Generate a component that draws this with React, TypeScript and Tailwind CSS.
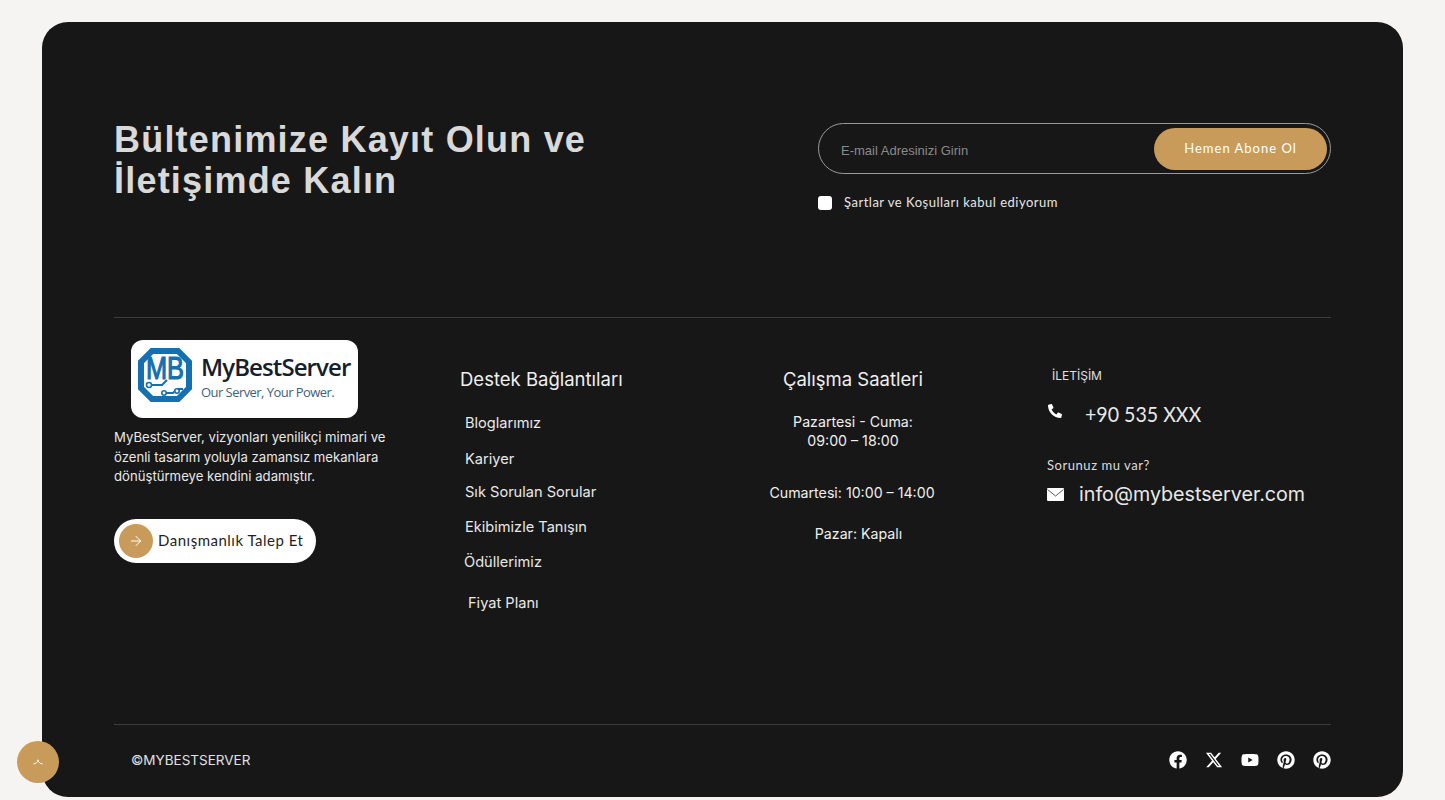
import { ArrowRight } from "lucide-react";
import { FaFacebook, FaPhone, FaPinterest, FaYoutube } from "react-icons/fa";
import { FaXTwitter } from "react-icons/fa6";

const links = [
  { label: "Bloglarımız", cls: "ml-[5px] mt-0" },
  { label: "Kariyer", cls: "ml-[5px] mt-[14px]" },
  { label: "Sık Sorulan Sorular", cls: "ml-[5px] mt-[11px]" },
  { label: "Ekibimizle Tanışın", cls: "ml-[5px] mt-[13px]" },
  { label: "Ödüllerimiz", cls: "ml-[4px] mt-[13px]" },
  { label: "Fiyat Planı", cls: "ml-[8px] mt-[19px]" },
];

const socials = [FaFacebook, FaXTwitter, FaYoutube, FaPinterest, FaPinterest];

function LogoMark() {
  return (
    <svg viewBox="0 0 54 54" className="-mt-[9px] h-[54px] w-[54px] shrink-0">
      <path d="M14 3H40L51 14V40L40 51H14L3 40V14Z" fill="none" stroke="#1470b0" strokeWidth="6" />
      <text x="8" y="31" textLength="38" lengthAdjust="spacingAndGlyphs" fontFamily="'Liberation Sans', sans-serif" fontSize="31" fontWeight="400" fill="#1470b0" stroke="#1470b0" strokeWidth="1.2">
        MB
      </text>
      <path d="M11 37H24L29 32M26 45H35L39 41H45" fill="none" stroke="#1470b0" strokeWidth="2" />
      <circle cx="11" cy="37" r="2.5" fill="white" stroke="#1470b0" strokeWidth="1.6" />
      <circle cx="26" cy="45" r="2.2" fill="white" stroke="#1470b0" strokeWidth="1.6" />
      <circle cx="39" cy="43" r="2.2" fill="white" stroke="#1470b0" strokeWidth="1.6" />
    </svg>
  );
}

function MailIcon() {
  return (
    <svg viewBox="0 0 17 13" className="h-[13px] w-[17px] shrink-0">
      <rect width="17" height="13" rx="1" fill="#ffffff" />
      <path d="M0.5 1.5L8.5 8L16.5 1.5" fill="none" stroke="#171717" strokeWidth="0.7" />
    </svg>
  );
}

export default function App() {
  return (
    <div className="relative h-[800px] overflow-hidden bg-[#f5f4f2] pt-[22px] pl-[42px] pr-[42px] font-['Inter',sans-serif]">
      <div className="h-[775px] rounded-[26px] bg-[#171717] px-[72px] pt-[98px] text-[#e8e8e8]">
        {/* newsletter */}
        <div className="flex h-[198px] border-b border-[#3c3c3c]">
          <h2 className="-mt-[1px] w-[704px] font-['Liberation_Sans',sans-serif] text-[36px] leading-[41px] font-bold tracking-[1.2px] text-[#d9d9d9]">
            Bültenimize Kayıt Olun ve
            <br />
            İletişimde Kalın
          </h2>
          <div className="w-[513px] pt-[3px]">
            <div className="flex h-[51px] items-center justify-between rounded-full border border-[#9a9a9a] pl-[22px] pr-[3px]">
              <span className="pt-[5px] font-['Liberation_Sans',sans-serif] text-[13px] text-[#8a8a8a]">E-mail Adresinizi Girin</span>
              <button className="h-[42px] w-[173px] rounded-full bg-[#c89b5a] font-['Lato',sans-serif] text-[13px] tracking-[1px] text-white">
                Hemen Abone Ol
              </button>
            </div>
            <div className="mt-[19px] flex items-center gap-[12px]">
              <span className="h-[14px] w-[14px] rounded-[3px] bg-white" />
              <span className="font-['Lato',sans-serif] text-[13px] tracking-[0.5px] text-[#e6e6e6]">Şartlar ve Koşulları kabul ediyorum</span>
            </div>
          </div>
        </div>

        {/* columns */}
        <div className="grid h-[407px] grid-cols-[346px_285px_302px_1fr] border-b border-[#3c3c3c]">
          <div className="pt-[22px]">
            <div className="ml-[17px] flex h-[78px] w-[227px] items-center gap-[9px] rounded-[12px] bg-white pl-[7px]">
              <LogoMark />
              <div className="font-['Open_Sans',sans-serif]">
                <div className="-mt-[4px] text-[24px] leading-[26px] font-semibold tracking-[-0.9px] text-[#15202b]">MyBestServer</div>
                <div className="mt-[5px] text-[13px] leading-[15px] tracking-[-0.55px] text-[#41617a]">Our Server, Your Power.</div>
              </div>
            </div>
            <p className="mt-[10px] w-[290px] text-[13.15px] leading-[19.5px] text-[#e8e8e8]">
              MyBestServer, vizyonları yenilikçi mimari ve özenli tasarım yoluyla zamansız mekanlara dönüştürmeye kendini adamıştır.
            </p>
            <div className="mt-[32px] flex h-[44px] w-[202px] items-center gap-[5px] rounded-full bg-white pl-[5px]">
              <span className="flex h-[34px] w-[34px] items-center justify-center rounded-full bg-[#c89b5a]">
                <ArrowRight size={16} strokeWidth={1.5} color="#ffffff" />
              </span>
              <span className="font-['Lato',sans-serif] text-[15px] tracking-[0.5px] text-[#1f1f1f]">Danışmanlık Talep Et</span>
            </div>
          </div>

          <div className="pt-[50px]">
            <h3 className="text-[18.5px] leading-[23px] text-[#efefef]">Destek Bağlantıları</h3>
            <ul className="mt-[21px] flex flex-col text-[14.6px] leading-[22px] text-[#e8e8e8]">
              {links.map((l) => (
                <li key={l.label} className={l.cls}>
                  {l.label}
                </li>
              ))}
            </ul>
          </div>

          <div className="w-[216px] pt-[50px] text-center text-[14.2px] leading-[19px] text-[#efefef]">
            <h3 className="text-[18.5px] leading-[23px]">Çalışma Saatleri</h3>
            <p className="mt-[21px]">
              Pazartesi - Cuma:
              <br />
              09:00 – 18:00
            </p>
            <p className="mt-[33px] -ml-[2px]">Cumartesi: 10:00 – 14:00</p>
            <p className="mt-[22px] ml-[11px]">Pazar: Kapalı</p>
          </div>

          <div className="pt-[50px]">
            <div className="ml-[5px] text-[12px] leading-[16px] text-[#e0e0e0]">İLETİŞİM</div>
            <div className="mt-[16px] flex items-center">
              <FaPhone className="-mt-[7px] ml-[1px] h-[14px] w-[14px] -scale-x-100 text-white" />
              <span className="ml-[23px] origin-left scale-x-[0.89] font-['Lato',sans-serif] text-[22px] leading-[28px] text-[#e8e8e8]">+90 535 XXX</span>
            </div>
            <div className="mt-[28px] font-['Lato',sans-serif] text-[13px] leading-[18px] tracking-[0.55px] text-[#dcdcdc]">Sorunuz mu var?</div>
            <div className="mt-[6px] flex items-center">
              <MailIcon />
              <span className="ml-[15px] text-[19.7px] leading-[28px] text-[#e8e8e8]">info@mybestserver.com</span>
            </div>
          </div>
        </div>

        {/* bottom bar */}
        <div className="flex items-center justify-between pt-[25px] pl-[17px]">
          <span className="text-[13.5px] leading-[20px] text-[#e0e0e0]">©MYBESTSERVER</span>
          <div className="flex items-center gap-[18px]">
            {socials.map((Icon, i) => (
              <Icon key={i} className="h-[18px] w-[18px] text-white" />
            ))}
          </div>
        </div>
      </div>

      {/* scroll to top */}
      <button className="absolute left-[17px] top-[741px] flex h-[42px] w-[42px] items-center justify-center rounded-full bg-[#c89b5a]">
        <svg viewBox="0 0 14 8" className="h-[6px] w-[12px]" fill="none" stroke="#ffffff" strokeWidth="1.3">
          <path d="M1 6.5C4 6.5 6.5 4.5 7 1C7.5 4.5 10 6.5 13 6.5" />
        </svg>
      </button>
    </div>
  );
}
